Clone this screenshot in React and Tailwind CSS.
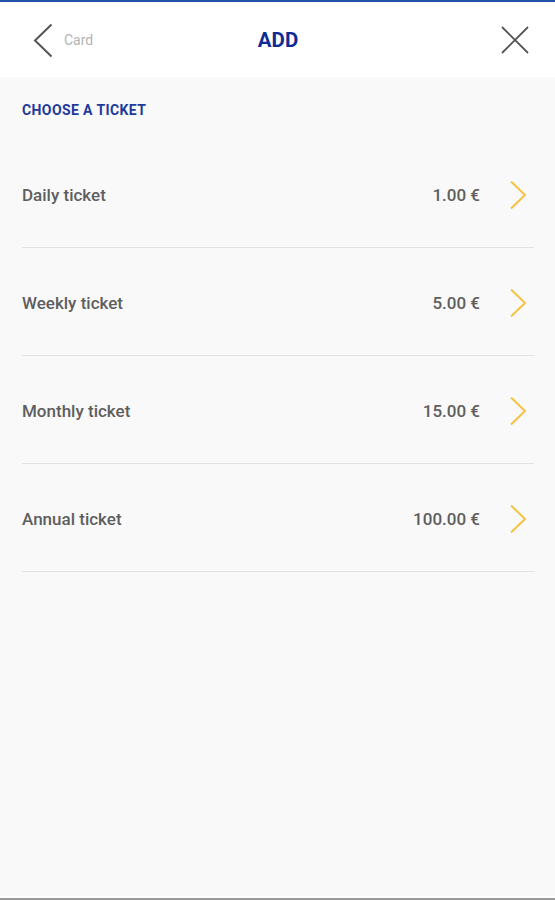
import React from "react";

const tickets = [
  { name: "Daily ticket", price: "1.00 €" },
  { name: "Weekly ticket", price: "5.00 €" },
  { name: "Monthly ticket", price: "15.00 €" },
  { name: "Annual ticket", price: "100.00 €" },
];

export default function App() {
  return (
    <div
      className="w-[555px] h-[900px] bg-[#f9f9f9] flex flex-col overflow-hidden"
      style={{ fontFamily: "Roboto, 'Liberation Sans', sans-serif" }}
    >
      <div className="h-[2px] bg-[#2452a8]" />
      <div className="h-[75px] bg-white flex items-center relative px-[33px]">
        <div className="flex items-center gap-[11px]">
          <svg width="20" height="35" viewBox="0 0 20 35" className="mt-[1px]">
            <path d="M18.5 1.5 L2 17.5 L18.5 33.5" fill="none" stroke="#555" strokeWidth="2" />
          </svg>
          <span className="text-[14px] text-[#b3b3b3] mt-[1px]">Card</span>
        </div>
        <div className="absolute left-0 right-0 top-0 bottom-0 flex items-center justify-center pointer-events-none">
          <span className="text-[20.5px] font-bold text-[#0f2c94] mt-[2px] ml-[1px]">ADD</span>
        </div>
        <div className="ml-auto mr-[-8px]">
          <svg width="30" height="30" viewBox="0 0 30 30" className="mt-[1px]">
            <path d="M2 2 L28 28 M28 2 L2 28" fill="none" stroke="#555" strokeWidth="1.8" />
          </svg>
        </div>
      </div>
      <div className="px-[22px]">
        <div className="h-[63px] flex items-center">
          <span className="text-[14px] font-bold text-[#1e3a9c] tracking-[0.4px] mt-[3px]">CHOOSE A TICKET</span>
        </div>
        {tickets.map((t) => (
          <div key={t.name} className="h-[108px] flex items-end border-b-[1.5px] border-[#e2e2e2] mr-[-1px]">
            <div className="h-[107px] w-full flex items-center pt-[3px]">
              <span className="text-[17px] font-medium text-[#5e5e5e] mt-[2px]">{t.name}</span>
              <span className="ml-auto text-[17px] font-medium text-[#5e5e5e] mt-[2px]">{t.price}</span>
              <svg width="18" height="30" viewBox="0 0 18 30" className="ml-[29px] mr-[7px]">
                <path d="M2 1.5 L16 15 L2 28.5" fill="none" stroke="#f5c343" strokeWidth="2" />
              </svg>
            </div>
          </div>
        ))}
      </div>
      <div className="flex-1" />
      <div className="h-[2px] bg-white" />
      <div className="h-[2px] bg-[#9a9a9a]" />
    </div>
  );
}
